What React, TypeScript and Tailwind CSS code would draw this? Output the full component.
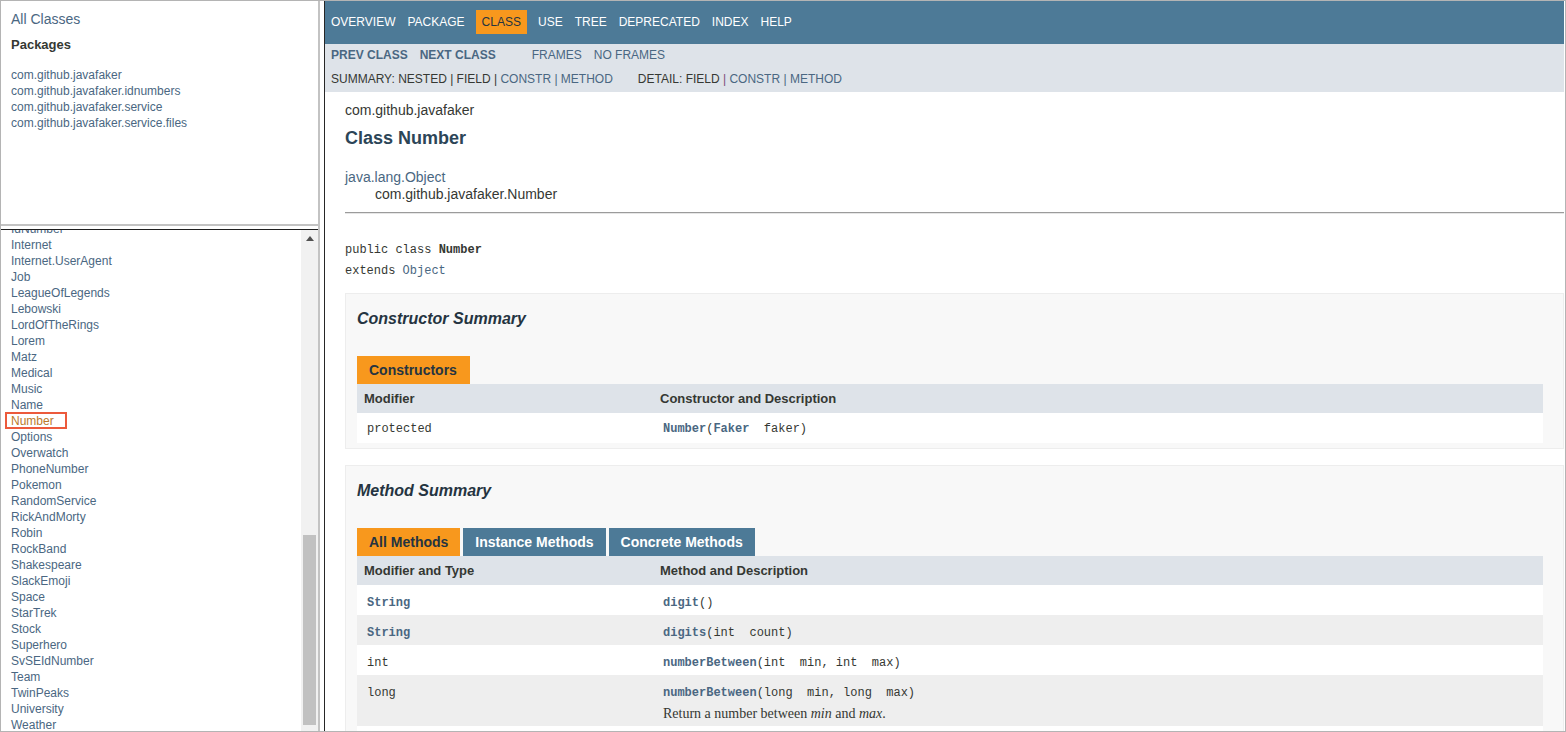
const classNames = [
  'IdNumber',
  'Internet',
  'Internet.UserAgent',
  'Job',
  'LeagueOfLegends',
  'Lebowski',
  'LordOfTheRings',
  'Lorem',
  'Matz',
  'Medical',
  'Music',
  'Name',
  'Number',
  'Options',
  'Overwatch',
  'PhoneNumber',
  'Pokemon',
  'RandomService',
  'RickAndMorty',
  'Robin',
  'RockBand',
  'Shakespeare',
  'SlackEmoji',
  'Space',
  'StarTrek',
  'Stock',
  'Superhero',
  'SvSEIdNumber',
  'Team',
  'TwinPeaks',
  'University',
  'Weather',
];

const packages = [
  'com.github.javafaker',
  'com.github.javafaker.idnumbers',
  'com.github.javafaker.service',
  'com.github.javafaker.service.files',
];

const navItems = ['Overview', 'Package', 'Class', 'Use', 'Tree', 'Deprecated', 'Index', 'Help'];

const LeftFrames = () => {
  return (
    <div className="w-[319px] shrink-0 flex flex-col border-r-2 border-[#c3c3c3]">
      {/* ---------------- packages frame ---------------- */}
      <div className="h-[225px] shrink-0 border-b-2 border-[#c3c3c3] px-[10px] pt-[9px]">
        <div className="text-[14px] leading-[18px] text-[#4a6782]">All Classes</div>
        <div className="text-[13px] leading-[16px] font-bold text-[#353833] mt-[9px]">Packages</div>
        <ul className="mt-[14px] text-[12px] leading-[16px] text-[#4a6782]">
          {packages.map((p) => (
            <li key={p}>{p}</li>
          ))}
        </ul>
      </div>
      <div className="h-[3px] shrink-0" />

      {/* ---------------- classes frame ---------------- */}
      <div className="flex-1 flex border-t border-[#1f1f1f] overflow-hidden">
        <ul className="flex-1 px-[10px] -mt-[9px] text-[12px] leading-[16px] text-[#4a6782]">
          {classNames.map((c) =>
            c === 'Number' ? (
              <li key={c} className="relative text-[#bb7a2a]">
                {c}
                <span className="absolute left-[-6px] top-[-1px] w-[62px] h-[17px] border-2 border-[#ec5a3c]" />
              </li>
            ) : (
              <li key={c}>{c}</li>
            )
          )}
        </ul>
        <div className="w-[17px] bg-[#f1f1f1] flex flex-col">
          <div className="h-[17px] flex items-center justify-center">
            <svg width="8" height="5" viewBox="0 0 8 5">
              <path d="M0 5 L4 0 L8 5 Z" fill="#505050" />
            </svg>
          </div>
          <div className="mt-auto mb-[6px] mx-[2px] h-[190px] bg-[#c1c1c1]" />
        </div>
      </div>
    </div>
  );
};

const Mono = ({ children, className = '' }: { children: React.ReactNode; className?: string }) => (
  <span className={`font-['Liberation_Mono',monospace] text-[12px] whitespace-pre ${className}`}>{children}</span>
);

const methods = [
  { type: 'String', link: true, name: 'digit', args: '()', bg: 'bg-white' },
  { type: 'String', link: true, name: 'digits', args: '(int  count)', bg: 'bg-[#eeeeee]' },
  { type: 'int', link: false, name: 'numberBetween', args: '(int  min, int  max)', bg: 'bg-white' },
  { type: 'long', link: false, name: 'numberBetween', args: '(long  min, long  max)', bg: 'bg-[#eeeeee]', desc: true },
];

const RightFrame = () => {
  return (
    <div className="w-[1240px] shrink-0 border-l border-[#262626] flex flex-col overflow-hidden">
      {/* ---------------- top nav ---------------- */}
      <div className="h-[43px] shrink-0 bg-[#4d7a97] pt-[9px]">
        <ul className="flex text-[12px] leading-[14px] uppercase text-white">
          {navItems.map((n) =>
            n === 'Class' ? (
              <li key={n} className="px-[6px] py-[5px] mx-[5px] bg-[#f8981d] text-[#253441]">
                {n}
              </li>
            ) : (
              <li key={n} className="px-[6px] py-[5px]">
                {n}
              </li>
            )
          )}
        </ul>
      </div>

      {/* ---------------- sub nav ---------------- */}
      <div className="h-[48px] shrink-0 bg-[#dee3e9] px-[6px] text-[12px] leading-[16px] uppercase">
        <div className="flex h-[22px] items-center">
          <span className="font-bold text-[#4a6782]">Prev Class</span>
          <span className="font-bold text-[#4a6782] ml-[12px]">Next Class</span>
          <span className="text-[#4a6782] ml-[36px]">Frames</span>
          <span className="text-[#4a6782] ml-[12px]">No Frames</span>
        </div>
        <div className="flex h-[26px] items-center text-[#353833]">
          <span>
            Summary:&nbsp;Nested&nbsp;|&nbsp;Field&nbsp;|&nbsp;<span className="text-[#4a6782]">Constr</span>
            <span className="text-[#4a6782]">&nbsp;|&nbsp;Method</span>
          </span>
          <span className="ml-[25px]">
            Detail:&nbsp;Field&nbsp;<span className="text-[#7b4b7a]">|</span>&nbsp;
            <span className="text-[#4a6782]">Constr&nbsp;|&nbsp;Method</span>
          </span>
        </div>
      </div>

      {/* ---------------- content ---------------- */}
      <div className="flex-1 pl-[20px] pt-[10px] text-[#353833]">
        <div className="text-[14px] leading-[16px]">com.github.javafaker</div>
        <h2 className="mt-[10px] text-[18px] leading-[20px] font-bold text-[#2c4557]">Class Number</h2>
        <div className="mt-[21px] text-[14px] leading-[17px]">
          <div className="text-[#4a6782]">java.lang.Object</div>
          <div className="pl-[30px]">com.github.javafaker.Number</div>
        </div>
        <div className="mt-[9px] border-t border-b border-t-[#9b9b9b] border-b-[#e6e6e6]" />

        <div className="mt-[25px] text-[12px] leading-[20px]">
          <div>
            <Mono>public class </Mono>
            <Mono className="font-bold">Number</Mono>
          </div>
          <div>
            <Mono>extends </Mono>
            <Mono className="text-[#4a6782]">Object</Mono>
          </div>
        </div>

        {/* ---------------- constructor summary ---------------- */}
        <section className="mt-[12px] bg-[#f8f8f8] border border-[#ededed] pl-[11px] pr-[20px] pt-[15px] pb-[5px]">
          <h3 className="text-[16px] leading-[20px] font-bold italic text-[#253441]">Constructor Summary</h3>
          <div className="mt-[27px] flex">
            <div className="h-[28px] pl-[12px] pr-[13px] bg-[#f8981d] text-[14px] font-bold text-[#253441] flex items-center">
              Constructors
            </div>
          </div>
          <div className="flex h-[29px] items-center bg-[#dee3e9] text-[13px] font-bold text-[#353833]">
            <div className="w-[296px] pl-[7px]">Modifier</div>
            <div className="pl-[7px]">Constructor and Description</div>
          </div>
          <div className="flex h-[30px] items-center bg-white text-[12px]">
            <div className="w-[296px] pl-[10px]">
              <Mono>protected</Mono>
            </div>
            <div className="pl-[10px]">
              <Mono className="font-bold text-[#4a6782]">Number</Mono>
              <Mono>(</Mono>
              <Mono className="font-bold text-[#4a6782]">Faker</Mono>
              <Mono>{'  faker)'}</Mono>
            </div>
          </div>
        </section>

        {/* ---------------- method summary ---------------- */}
        <section className="mt-[16px] bg-[#f8f8f8] border border-[#ededed] pl-[11px] pr-[20px] pt-[15px] pb-[5px]">
          <h3 className="text-[16px] leading-[20px] font-bold italic text-[#253441]">Method Summary</h3>
          <div className="mt-[27px] flex gap-[3px] text-[14px] font-bold">
            <div className="h-[28px] pl-[12px] pr-[12px] bg-[#f8981d] text-[#253441] flex items-center">All Methods</div>
            <div className="h-[28px] px-[12px] bg-[#4d7a97] text-white flex items-center">Instance Methods</div>
            <div className="h-[28px] px-[12px] bg-[#4d7a97] text-white flex items-center">Concrete Methods</div>
          </div>
          <div className="flex h-[29px] items-center bg-[#dee3e9] text-[13px] font-bold text-[#353833]">
            <div className="w-[296px] pl-[7px]">Modifier and Type</div>
            <div className="pl-[7px]">Method and Description</div>
          </div>
          {methods.map((m, i) => (
            <div key={i} className={`flex text-[12px] ${m.bg} pt-[9px] ${m.desc ? 'pb-[3px]' : 'pb-[4px]'}`}>
              <div className="w-[296px] pl-[10px] leading-[16px]">
                <Mono className={m.link ? 'font-bold text-[#4a6782]' : ''}>{m.type}</Mono>
              </div>
              <div className="pl-[10px]">
                <div className="leading-[16px]">
                  <Mono className="font-bold text-[#4a6782]">{m.name}</Mono>
                  <Mono>{m.args}</Mono>
                </div>
                {m.desc && (
                  <div className="mt-[4px] font-['Liberation_Serif',serif] text-[14px] leading-[18px]">
                    Return a number between <i>min</i> and <i>max</i>.
                  </div>
                )}
              </div>
            </div>
          ))}
          <div className="h-[30px] bg-white" />
        </section>
      </div>
    </div>
  );
};

const App = () => {
  return (
    <div className="w-[1566px] h-[732px] overflow-hidden bg-white border border-[#b4b4b4] flex font-['Liberation_Sans',Arial,sans-serif]">
      <LeftFrames />
      <div className="w-[4px] shrink-0" />
      <RightFrame />
    </div>
  );
};

export default App;
